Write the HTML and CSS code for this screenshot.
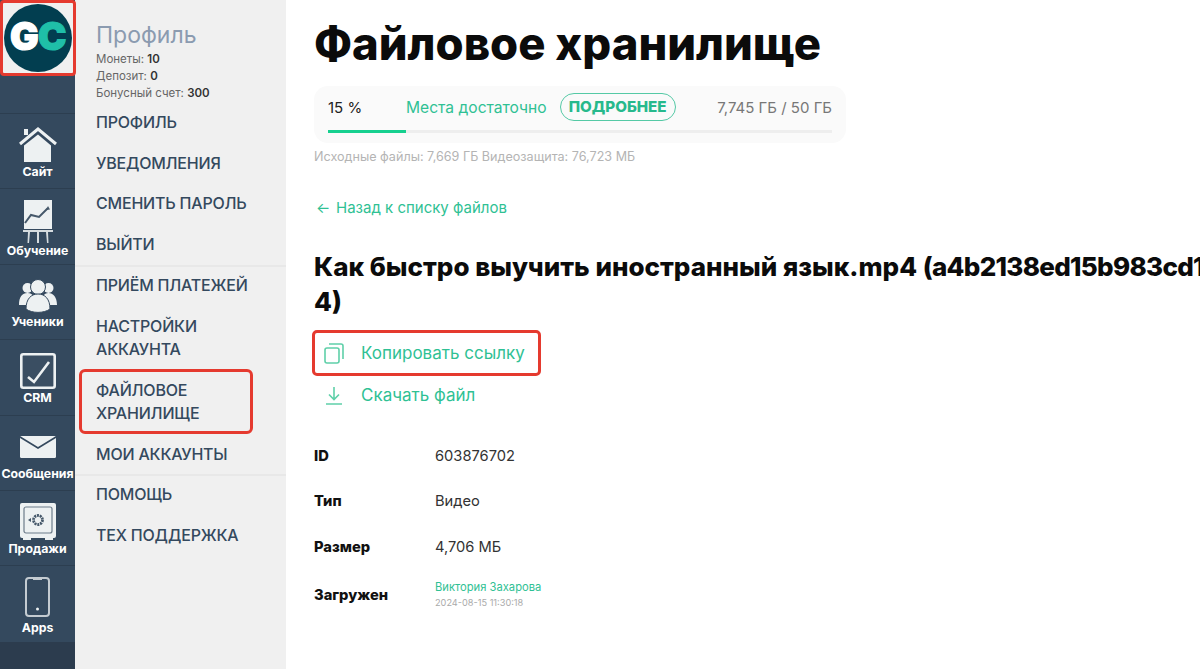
FILE: index.html
```html
<!DOCTYPE html>
<html lang="ru">
<head>
<meta charset="utf-8">
<title>Файловое хранилище</title>
<link rel="stylesheet" href="styles.css">
</head>
<body>
<div class="app">
  <nav class="rail">
    <div class="logo-box">
      <svg class="logo" viewBox="0 0 68 68"><circle cx="34" cy="34" r="34" fill="#023e50"/><text x="6" y="46" class="logo-g">G</text><text x="34" y="46" class="logo-c">C</text></svg>
    </div>
    <div class="rail-spacer"></div>
    <a class="rail-item item-home">
      <svg class="ri" viewBox="0 0 38 36"><path d="M5 2h4v6H5z" fill="#edf1f2"/><path d="M1 17 19 2l18 15" fill="none" stroke="#edf1f2" stroke-width="3"/><path d="M19 7.500 32 18.500V35H5V18.500z" fill="#edf1f2"/></svg>
      <span>Сайт</span>
    </a>
    <a class="rail-item item-learn">
      <svg class="ri" viewBox="0 0 32 45"><path d="M2 1h28v29H2z" fill="#edf1f2"/><path d="M3 24l6-8 8 2 9-9" fill="none" stroke="#45586a" stroke-width="2"/><path d="M26 7l2 3.500-4 .5z" fill="#45586a"/><path d="M1 31h30v2H1zM6 33h2l-1 11H5.500zM15 33h2v11h-2zM24 33h2l.5 11H25z" fill="#d6dcdf"/></svg>
      <span>Обучение</span>
    </a>
    <a class="rail-item item-users">
      <svg class="ri" viewBox="0 0 38 34"><circle cx="8.500" cy="9" r="5" fill="#edf1f2"/><circle cx="29.500" cy="9" r="5" fill="#edf1f2"/><path d="M0 26c0-8 3-12 8.500-12S16 18 16 26zM22 26c0-8 3-12 7.500-12S38 18 38 26z" fill="#edf1f2"/><circle cx="19" cy="8" r="7.500" fill="#edf1f2" stroke="#34495e"/><path d="M7 30c0-10 5-15 12-15s12 5 12 15c-6 4.500-18 4.500-24 0z" fill="#edf1f2" stroke="#34495e"/></svg>
      <span>Ученики</span>
    </a>
    <a class="rail-item item-crm">
      <svg class="ri" viewBox="0 0 36 36"><rect x="1.300" y="1.300" width="33.400" height="33.400" rx="2" fill="#3a4e62" stroke="#edf1f2" stroke-width="2.600"/><path d="M8 24l6 5 15-20" fill="none" stroke="#edf1f2" stroke-width="2.600"/></svg>
      <span>CRM</span>
    </a>
    <a class="rail-item item-mail">
      <svg class="ri" viewBox="0 0 36 22"><rect width="36" height="22" rx="1.500" fill="#edf1f2"/><path d="M0 1l18 11L36 1" fill="none" stroke="#34495e" stroke-width="1.600"/></svg>
      <span>Сообщения</span>
    </a>
    <a class="rail-item item-safe">
      <svg class="ri" viewBox="0 0 36 37"><rect width="36" height="35" rx="2" fill="#edf1f2"/><rect x="4" y="4" width="28" height="26" rx="2" fill="none" stroke="#6d7c8a" stroke-width="1.200"/><circle cx="18" cy="17" r="4.500" fill="none" stroke="#45586a" stroke-width="2.800" stroke-dasharray="2 .8"/><path d="M8 17l3-2v4z" fill="#45586a"/><path d="M3 35h8v2H3zM25 35h8v2h-8z" fill="#edf1f2"/></svg>
      <span>Продажи</span>
    </a>
    <a class="rail-item item-apps">
      <svg class="ri" viewBox="0 0 25 40"><rect x="1" y="1" width="23" height="38" rx="3" fill="none" stroke="#c4cbd1" stroke-width="2"/><path d="M8 1h9v2H8z" fill="#c4cbd1"/><circle cx="12.500" cy="32" r="1.500" fill="#edf1f2"/></svg>
      <span>Apps</span>
    </a>
    <div class="rail-end"></div>
  </nav>

  <aside class="menu">
    <div class="profile">
      <div class="profile-title">Профиль</div>
      <div class="stat">Монеты: <b>10</b></div>
      <div class="stat">Депозит: <b>0</b></div>
      <div class="stat">Бонусный счет: <b>300</b></div>
    </div>
    <ul class="group">
      <li>ПРОФИЛЬ</li>
      <li>УВЕДОМЛЕНИЯ</li>
      <li>СМЕНИТЬ ПАРОЛЬ</li>
      <li>ВЫЙТИ</li>
    </ul>
    <ul class="group">
      <li>ПРИЁМ ПЛАТЕЖЕЙ</li>
      <li>НАСТРОЙКИ АККАУНТА</li>
      <li class="marked">ФАЙЛОВОЕ ХРАНИЛИЩЕ</li>
      <li>МОИ АККАУНТЫ</li>
    </ul>
    <ul class="group">
      <li>ПОМОЩЬ</li>
      <li>ТЕХ ПОДДЕРЖКА</li>
    </ul>
  </aside>

  <main class="content">
    <h1>Файловое хранилище</h1>
    <section class="quota">
      <div class="quota-row">
        <span class="pct">15 %</span>
        <span class="enough">Места достаточно</span>
        <span class="more">ПОДРОБНЕЕ</span>
        <span class="used">7,745 ГБ / 50 ГБ</span>
      </div>
      <div class="bar"><div class="bar-fill"></div></div>
    </section>
    <p class="files-note">Исходные файлы: 7,669 ГБ Видеозащита: 76,723 МБ</p>
    <a class="back"><span class="back-arrow">←</span>Назад к списку файлов</a>
    <h2>Как быстро выучить иностранный язык.mp4 <span class="hash">(a4b2138ed15b983cd1</span><br>4)</h2>
    <a class="action action-marked">
      <svg class="act-icon" viewBox="0 0 20 21"><rect x="1" y="5" width="14" height="15" rx="2" fill="none" stroke="#5fd0a9" stroke-width="1.600"/><path d="M5 1h12a2 2 0 0 1 2 2v13" fill="none" stroke="#5fd0a9" stroke-width="1.600"/></svg>
      <span>Копировать ссылку</span>
    </a>
    <a class="action action-plain">
      <svg class="act-icon" viewBox="0 0 20 21"><path d="M10 2v12M5 9.500l5 5 5-5M2 19h16" fill="none" stroke="#5fd0a9" stroke-width="1.600"/></svg>
      <span>Скачать файл</span>
    </a>
    <dl class="props">
      <dt>ID</dt><dd>603876702</dd>
      <dt>Тип</dt><dd>Видео</dd>
      <dt>Размер</dt><dd>4,706 МБ</dd>
      <dt class="row-tall">Загружен</dt>
      <dd class="row-tall uploader"><span class="name">Виктория Захарова</span><span class="date">2024-08-15 11:30:18</span></dd>
    </dl>
  </main>
</div>
</body>
</html>
```
FILE: styles.css
```css
* { box-sizing: border-box; }
html, body { margin: 0; height: 100%; overflow: hidden; background: #fff; }
body { font-family: Inter, "Noto Sans", sans-serif; color: #111; }
.app { display: flex; width: 1200px; height: 669px; overflow: hidden; }

.rail { width: 75px; flex: none; background: #34495e; display: flex; flex-direction: column; }
.logo-box { height: 76px; width: 76px; flex: none; background: #f0f0f0; border: 3px solid #e53a2f; border-radius: 4px; display: flex; align-items: center; justify-content: center; position: relative; z-index: 1; }
.logo { width: 68px; height: 68px; display: block; flex: none; }
.logo-g, .logo-c { font: 900 38px Inter, sans-serif; stroke-width: 1.200px; }
.logo-g { fill: #fff; stroke: #fff; }
.logo-c { fill: #1fbfa8; stroke: #1fbfa8; }
.rail-spacer { height: 38px; flex: none; border-bottom: 1px solid #2c3e50; }
.rail-item { height: 75.400px; flex: none; border-bottom: 1px solid #2c3e50; color: #fff; display: flex; flex-direction: column; align-items: center; font-size: 12.300px; font-weight: 700; line-height: 14px; white-space: nowrap; }
.rail-item span { display: block; }
.ri { display: block; flex: none; }
.item-home { padding-top: 13px; }
.item-home .ri { width: 38px; height: 36px; }
.item-home span { margin-top: 2px; }
.item-learn { padding-top: 10px; }
.item-learn .ri { width: 32px; height: 45px; }
.item-learn span { margin-top: 0; }
.item-users { padding-top: 14px; }
.item-users .ri { width: 38px; height: 34px; }
.item-users span { margin-top: 2px; }
.item-crm { padding-top: 13px; }
.item-crm .ri { width: 36px; height: 36px; }
.item-crm span { margin-top: 2px; }
.item-mail { padding-top: 20px; }
.item-mail .ri { width: 36px; height: 22px; }
.item-mail span { margin-top: 9px; }
.item-safe { padding-top: 12px; }
.item-safe .ri { width: 36px; height: 37px; }
.item-safe span { margin-top: 2px; }
.item-apps { padding-top: 11px; border-bottom: 0; }
.item-apps .ri { width: 25px; height: 40px; }
.item-apps span { margin-top: 4px; }
.rail-end { flex: 1; background: #2c3c4e; }

.menu { width: 211px; flex: none; background: #f0f0f0; padding: 22px 0 0; }
.profile { padding-left: 21px; }
.profile-title { font-size: 23px; line-height: 26px; margin-bottom: 3px; color: #8b9bb0; font-weight: 400; }
.stat { font-size: 11.500px; line-height: 17px; color: #666; }
.stat b { color: #333; font-weight: 600; }
.group { list-style: none; margin: 0 0 -2px; padding: 0; border-bottom: 2px solid #e8e8e8; }
.group:last-child { border-bottom: 0; }
.group li { padding: 8.900px 10px 8.900px 21px; font-size: 16px; line-height: 23px; font-weight: 500; color: #34495e; letter-spacing: -.2px; }
.group .marked { margin: -.5px 33px -.5px 4px; padding: 6.500px 10px 6.500px 14px; border: 3px solid #e53a2f; border-radius: 6px; }

.content { flex: 1; min-width: 0; padding-left: 28px; }
h1 { margin: 17px 0 0; font-size: 45.400px; line-height: 54px; font-weight: 800; color: #0b0b0b; white-space: nowrap; }
.quota { width: 532px; height: 57px; margin-top: 15px; padding: 7px 14px 0; background: #fafafa; border-radius: 14px; }
.quota-row { display: flex; align-items: center; height: 28px; font-size: 15px; }
.pct { width: 78px; flex: none; color: #222; }
.enough { color: #2fc194; margin-right: 13px; font-size: 15.600px; }
.more { border: 1px solid #54c9a5; border-radius: 14px; height: 28px; line-height: 26px; padding: 0 8px; color: #27b98c; font-weight: 800; font-size: 15.200px; }
.used { margin-left: auto; color: #777; }
.bar { height: 3px; margin-top: 9px; background: #eee; }
.bar-fill { width: 15.500%; height: 3px; background: #16d08f; }
.files-note { margin: 6px 0 0; font-size: 12.600px; line-height: 16px; color: #b4b4b4; }
.back { display: flex; margin-top: 34px; font-size: 15px; line-height: 18px; color: #2fc194; }
.back-arrow { margin-left: 2px; width: 20px; flex: none; }
h2 { margin: 32px 0 0; font-size: 26px; line-height: 35px; font-weight: 800; color: #0b0b0b; white-space: nowrap; }
.hash { letter-spacing: -.7px; }
.action { display: flex; align-items: center; font-size: 17px; color: #2fc194; }
.action-marked { width: 229px; height: 46px; margin: 11px 0 0 -2px; border: 3px solid #e53a2f; border-radius: 5px; padding-left: 9px; gap: 17px; }
.action-plain { height: 38px; margin-left: 10px; gap: 17px; }
.act-icon { width: 20px; height: 21px; flex: none; }
.props { display: grid; grid-template-columns: 121px 1fr; margin: 19px 0 0; font-size: 14.700px; }
.props dt { font-weight: 800; height: 45.500px; display: flex; align-items: center; color: #111; }
.props dd { margin: 0; height: 45.500px; display: flex; align-items: center; color: #333; }
.props .row-tall { height: 51px; }
.props .uploader { flex-direction: column; align-items: flex-start; justify-content: center; }
.name { font-size: 11.200px; line-height: 15px; color: #2fc194; }
.date { font-size: 9.200px; line-height: 15px; color: #aaa; }
```
